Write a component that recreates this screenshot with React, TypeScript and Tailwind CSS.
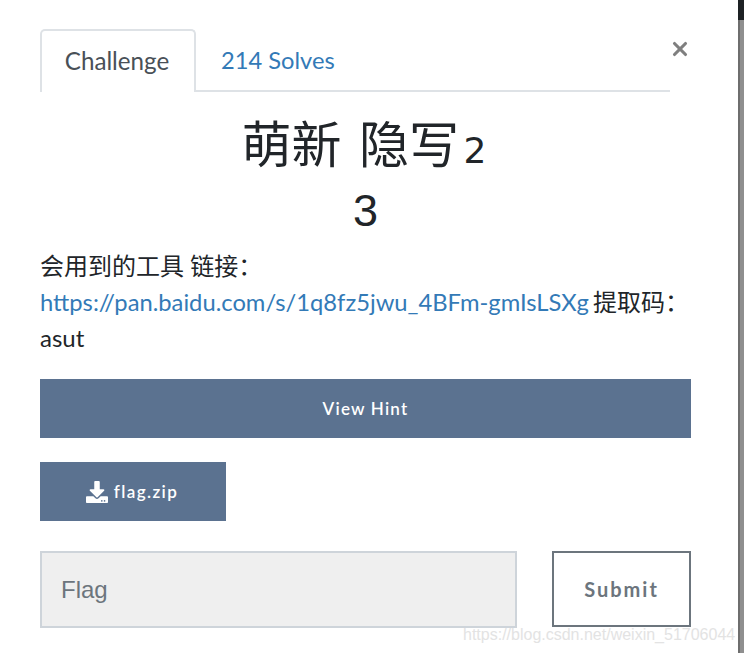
import { X } from "lucide-react";

const SANS = "font-['Lato','Noto_Sans_CJK_SC',sans-serif]";

const DownloadIcon = () => (
  <svg viewBox="0 0 512 512" className="w-[22px] h-[22px] fill-white">
    <path d="M216 0h80c13.300 0 24 10.700 24 24v168h87.700c17.800 0 26.700 21.500 14.100 34.100L269.700 378.300c-7.500 7.500-19.800 7.500-27.300 0L90.100 226.100c-12.600-12.600-3.700-34.100 14.100-34.100H192V24c0-13.300 10.700-24 24-24zm296 376v112c0 13.300-10.700 24-24 24H24c-13.300 0-24-10.700-24-24V376c0-13.300 10.700-24 24-24h146.700l49 49c20.100 20.100 52.500 20.100 72.600 0l49-49H488c13.300 0 24 10.700 24 24zm-124 88c0-11-9-20-20-20s-20 9-20 20 9 20 20 20 20-9 20-20zm64 0c0-11-9-20-20-20s-20 9-20 20 9 20 20 20 20-9 20-20z" />
  </svg>
);

export default function App() {
  return (
    <div className="h-[653px] w-[744px] overflow-hidden flex bg-white">
      <main className={`relative w-[738px] pl-10 pr-[47px] pt-[29px] ${SANS} text-[#212529]`}>
        <button className="absolute left-[669px] top-[38px] text-[#7f7f7f]">
          <X className="w-[22px] h-[22px]" strokeWidth={3.4} />
        </button>

        <div className="flex w-[630px] h-[63px] border-b-2 border-[#dee2e6]">
          <div className="h-[63px] w-[156px] pb-[1px] pr-[2px] border-2 border-b-0 border-[#dee2e6] rounded-t-[5px] bg-white flex items-center justify-center text-[24.2px] text-[#495057]">
            Challenge
          </div>
          <div className="ml-[25px] h-[61px] pt-[2px] flex items-center text-[23.7px] text-[#337ab7]">
            214 Solves
          </div>
        </div>

        <h1 className="mt-[25px] text-center text-[50px] leading-[58px] font-['Liberation_Sans','Noto_Sans_CJK_SC',sans-serif]">
          <span className="[word-spacing:3.5px]">萌新 隐写</span>
          <span className="text-[36px] ml-[4.5px] mr-[3px] font-['DejaVu_Sans',sans-serif]">2</span>
          <br />
          <span className="text-[45px]">3</span>
        </h1>

        <div className="mt-[8px] text-[24px] leading-[36px]">
          <div>会用到的工具 链接：</div>
          <div className="whitespace-nowrap">
            <span className="text-[#337ab7] text-[23.75px] mr-[-2px]">https://pan.baidu.com/s/1q8fz5jwu_4BFm-gmIsLSXg</span> 提取码：
          </div>
          <div>asut</div>
        </div>

        <button className="mt-[23px] block w-[651px] h-[59px] bg-[#5b7290] text-white text-[17px] font-semibold tracking-[1.2px]">
          View Hint
        </button>

        <button className="mt-6 flex items-center justify-center gap-[6px] w-[186px] h-[59px] pr-[2px] bg-[#5b7290] text-white text-[17px] font-semibold tracking-[1.4px]">
          <DownloadIcon />
          flag.zip
        </button>

        <div className="mt-[30px] flex justify-between w-[651px]">
          <div className="w-[477px] h-[77px] bg-[#efefef] border-2 border-[#ced4da] flex items-center pl-[19px] text-[24px] text-[#6c757d] font-['Liberation_Sans',sans-serif]">
            Flag
          </div>
          <button className="w-[139px] h-[76px] bg-white border-2 border-[#6c757d] text-[#6c757d] text-[20px] font-bold tracking-[2px]">
            Submit
          </button>
        </div>

        <div className="absolute left-[463px] top-[625px] text-[16px] leading-[20px] text-[#e3e3e3] font-['Liberation_Sans',sans-serif] whitespace-nowrap">
          https://blog.csdn.net/weixin_51706044
        </div>
      </main>

      <div className="w-[6px] h-full bg-[#8f8f8f] border-l-2 border-[#6e6e6e] flex flex-col">
        <div className="h-[20px] -ml-[2px] w-[6px] bg-[#1d2124]" />
      </div>
    </div>
  );
}
